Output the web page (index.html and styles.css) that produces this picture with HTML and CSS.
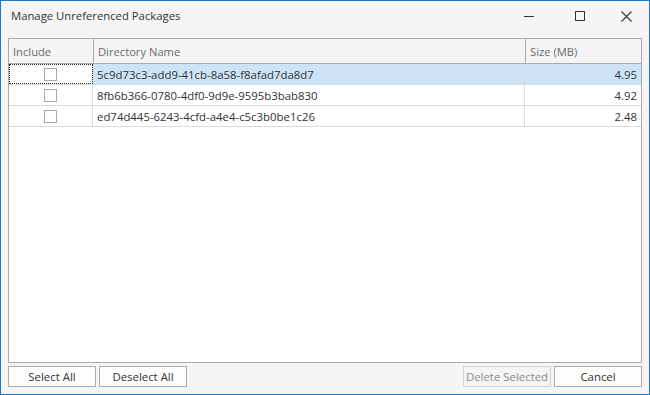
FILE: index.html
```html
<!DOCTYPE html>
<html>
<head>
<meta charset="utf-8">
<link rel="stylesheet" href="styles.css">
</head>
<body>
<div class="window">
  <div class="titlebar">
    <div class="title">Manage Unreferenced Packages</div>
    <div class="controls">
      <div class="ctl min"><svg width="10" height="10" viewBox="0 0 10 10"><path d="M0 5.5H10" stroke="#333" stroke-width="1"/></svg></div>
      <div class="ctl"><svg width="10" height="10" viewBox="0 0 10 10"><rect x="0.5" y="0.5" width="9" height="9" fill="none" stroke="#333" stroke-width="1"/></svg></div>
      <div class="ctl"><svg width="11" height="11" viewBox="0 0 11 11"><path d="M0.5 0.5L10.5 10.5M10.5 0.5L0.5 10.5" stroke="#333" stroke-width="1.1"/></svg></div>
    </div>
  </div>
  <div class="body">
    <div class="grid">
      <div class="row header">
        <div class="cell c1">Include</div>
        <div class="cell c2">Directory Name</div>
        <div class="cell c3">Size (MB)</div>
      </div>
      <div class="row selected">
        <div class="cell c1 focus"><span class="check"></span></div>
        <div class="cell c2">5c9d73c3-add9-41cb-8a58-f8afad7da8d7</div>
        <div class="cell c3 num">4.95</div>
      </div>
      <div class="row">
        <div class="cell c1"><span class="check"></span></div>
        <div class="cell c2">8fb6b366-0780-4df0-9d9e-9595b3bab830</div>
        <div class="cell c3 num">4.92</div>
      </div>
      <div class="row">
        <div class="cell c1"><span class="check"></span></div>
        <div class="cell c2">ed74d445-6243-4cfd-a4e4-c5c3b0be1c26</div>
        <div class="cell c3 num">2.48</div>
      </div>
    </div>
    <div class="buttons">
      <button class="btn">Select All</button>
      <button class="btn">Deselect All</button>
      <div class="spacer"></div>
      <button class="btn disabled">Delete Selected</button>
      <button class="btn">Cancel</button>
    </div>
  </div>
</div>
</body>
</html>
```
FILE: styles.css
```css
html, body {
  margin: 0;
  padding: 0;
}
body {
  font-family: "Open Sans", "Noto Sans", sans-serif;
  font-size: 11.4px;
  color: #333;
}
.window {
  width: 650px;
  height: 395px;
  box-sizing: border-box;
  border: 1px solid #1c78c8;
  background: #f5f5f5;
  display: flex;
  flex-direction: column;
}
.titlebar {
  height: 30px;
  display: flex;
  align-items: center;
  flex: none;
}
.title {
  padding-left: 10px;
  font-size: 11.3px;
  color: #333;
  flex: 1;
  margin-top: -1px;
}
.controls {
  display: flex;
  height: 30px;
}
.ctl {
  width: 46px;
  height: 30px;
  display: flex;
  align-items: center;
  justify-content: center;
}
.ctl.min {
  justify-content: flex-start;
  padding-left: 13px;
  box-sizing: border-box;
}
.body {
  flex: 1;
  display: flex;
  flex-direction: column;
  padding: 7px;
  min-height: 0;
}
.grid {
  flex: 1;
  border: 1px solid #a9a9a9;
  background: #fff;
}
.row {
  display: flex;
  height: 21px;
  border-bottom: 1px solid #dcdcdc;
  box-sizing: border-box;
}
.row.header {
  height: 25px;
  background: #f5f5f5;
  border-bottom: 1px solid #ababab;
  color: #6a6a6a;
  font-size: 11.2px;
}
.row.header .cell {
  border-right: none;
  border-left: 1px solid #ababab;
  padding-left: 4px;
}
.row.header .c1 {
  border-left: none;
}
.row.selected {
  background: #cde4f7;
}
.cell {
  box-sizing: border-box;
  display: flex;
  align-items: center;
  padding-left: 4px;
  border-right: 1px solid #dcdcdc;
  white-space: nowrap;
}
.c1 {
  width: 84px;
  justify-content: center;
}
.row.header .c1 {
  justify-content: flex-start;
}
.c2 {
  width: 432px;
}
.c3 {
  flex: 1;
  border-right: none;
}
.num {
  justify-content: flex-end;
  padding-right: 4px;
}
.focus {
  outline: 1px dotted #222;
  outline-offset: -1px;
  background: #fff;
}
.check {
  width: 13px;
  height: 13px;
  box-sizing: border-box;
  border: 1px solid #a8a8a8;
  background: #fff;
  margin-left: -4px;
}
.buttons {
  display: flex;
  gap: 3px;
  margin-top: 3px;
  height: 21px;
}
.spacer {
  flex: 1;
}
.btn {
  width: 88px;
  height: 21px;
  margin: 0;
  padding: 0;
  font-family: inherit;
  font-size: 11.4px;
  color: #333;
  background: #fdfdfd;
  border: 1px solid #adadad;
}
.btn.disabled {
  color: #8a8a8a;
  border-color: #d2d2d2;
  background: #f5f5f5;
}
```
